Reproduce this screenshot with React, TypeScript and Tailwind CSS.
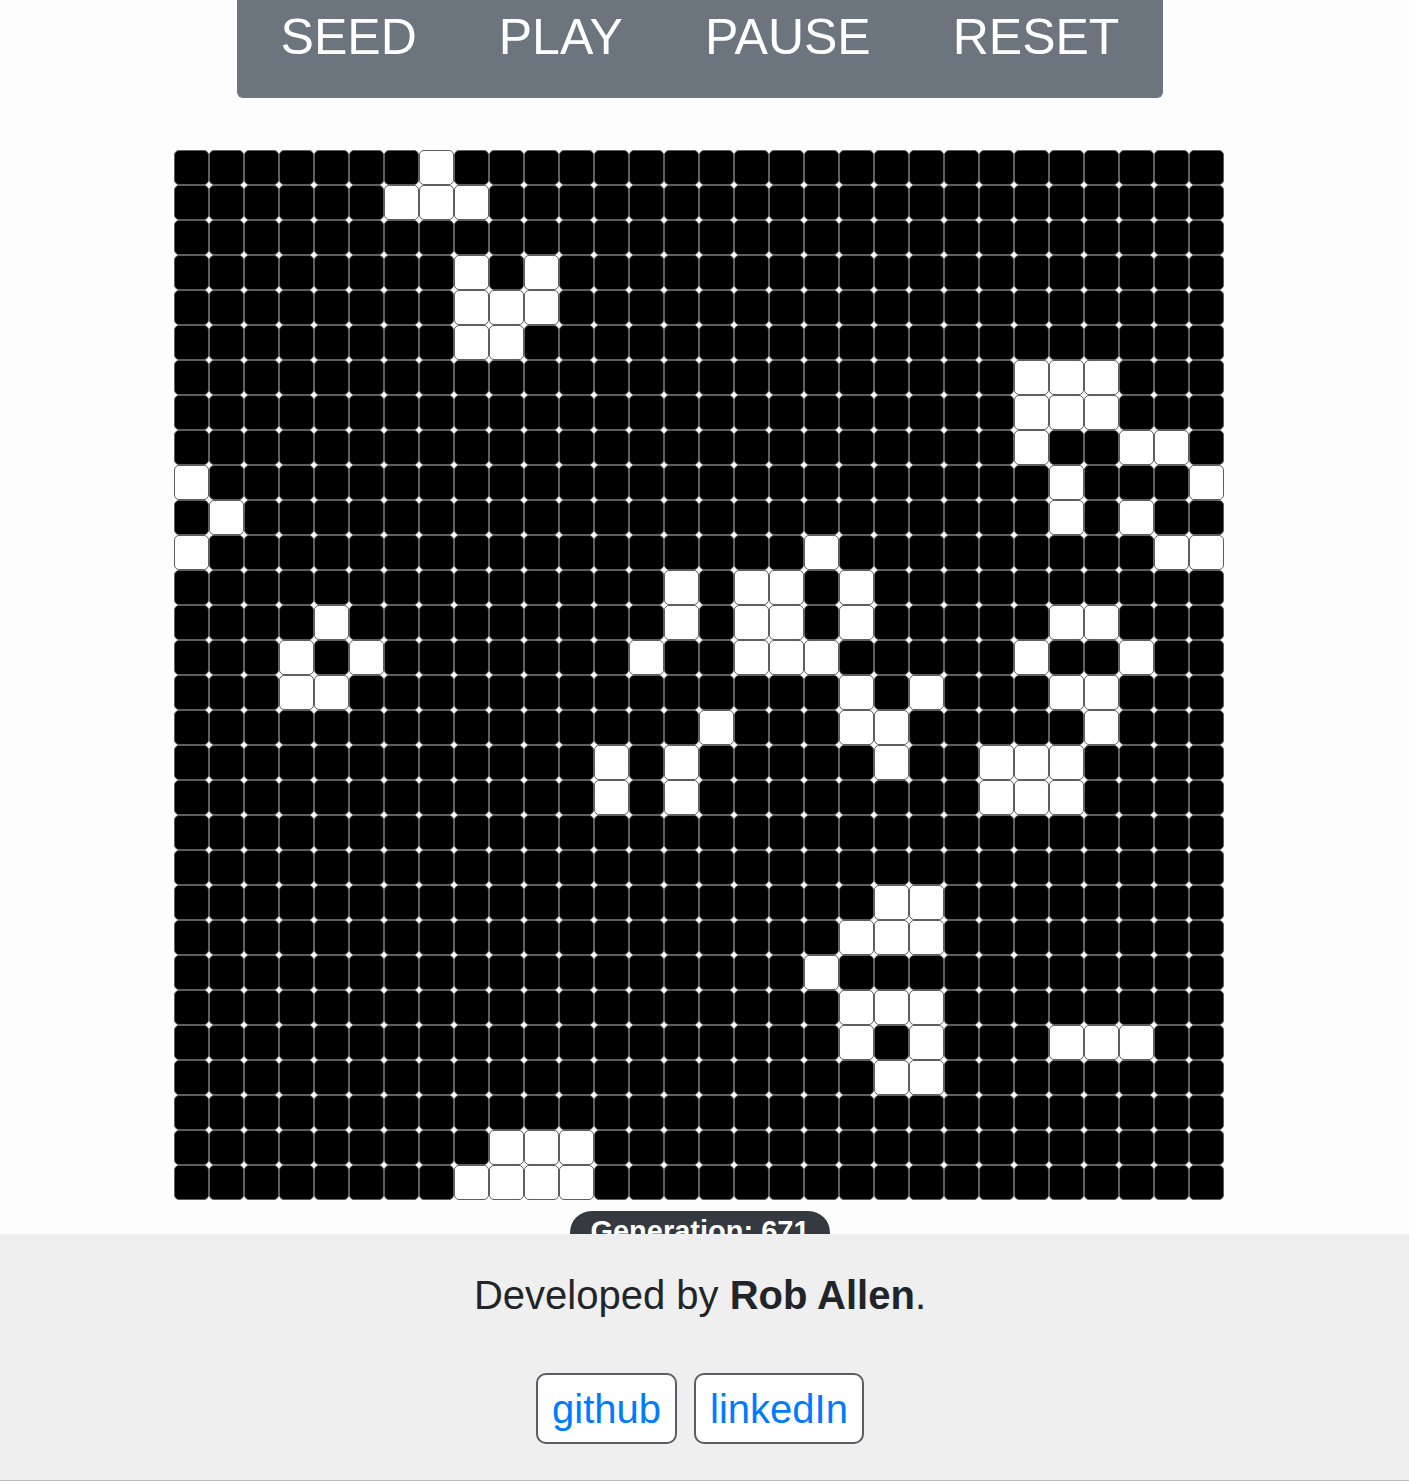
import React from "react"

const SIZE = 30

// live cells per row, taken from the current generation
const LIVE: Record<number, number[]> = {
	0: [7],
	1: [6, 7, 8],
	3: [8, 10],
	4: [8, 9, 10],
	5: [8, 9],
	6: [24, 25, 26],
	7: [24, 25, 26],
	8: [24, 27, 28],
	9: [0, 25, 29],
	10: [1, 25, 27],
	11: [0, 18, 28, 29],
	12: [14, 16, 17, 19],
	13: [4, 14, 16, 17, 19, 25, 26],
	14: [3, 5, 13, 16, 17, 18, 24, 27],
	15: [3, 4, 19, 21, 25, 26],
	16: [15, 19, 20, 26],
	17: [12, 14, 20, 23, 24, 25],
	18: [12, 14, 23, 24, 25],
	21: [20, 21],
	22: [19, 20, 21],
	23: [18],
	24: [19, 20, 21],
	25: [19, 21, 25, 26, 27],
	26: [20, 21],
	28: [9, 10, 11],
	29: [8, 9, 10, 11],
}

const isAlive = (r: number, c: number) => (LIVE[r] ?? []).includes(c)

function Controls() {
	const items = ["SEED", "PLAY", "PAUSE", "RESET"]
	return (
		<nav className="mx-auto flex h-[98px] w-[926px] justify-center gap-[82px] rounded-b-[6px] bg-[#6c757d] pt-[9px]">
			{items.map((item) => (
				<button key={item} className="h-[57px] text-[50px] leading-[57px] text-white">
					{item}
				</button>
			))}
		</nav>
	)
}

function Board() {
	const cells = []
	for (let r = 0; r < SIZE; r++) {
		for (let c = 0; c < SIZE; c++) {
			cells.push(
				<div
					key={`${r}-${c}`}
					className={
						isAlive(r, c)
							? "h-[35px] w-[35px] rounded-[5px] border border-[#5e5e5e] bg-white"
							: "h-[35px] w-[35px] rounded-[5px] border border-[#5e5e5e] bg-black"
					}
				/>
			)
		}
	}
	return <div className="mt-[52px] ml-[174px] grid w-[1050px] grid-cols-[repeat(30,35px)]">{cells}</div>
}

export default function App() {
	return (
		<div className="min-h-[1482px] bg-[#fdfdfd] font-['Liberation_Sans',Arial,sans-serif] text-[#212529]">
			<main className="flex w-[1400px] flex-col">
				<Controls />
				<Board />
				<div className="mx-auto mt-[11px] h-[23px] overflow-hidden">
					<span className="block rounded-full bg-[#343a40] px-[20px] pt-[4px] pb-[6px] text-[29px] leading-[33px] font-bold text-white">
						Generation: 671
					</span>
				</div>
			</main>
			<footer className="border-b border-[#bdbdbd] bg-[#efefef] pt-[38px] pb-[36px]">
				<div className="w-[1400px] text-center">
					<p className="text-[40px] leading-[46px]">
						Developed by <b>Rob Allen</b>.
					</p>
					<div className="mt-[55px] flex justify-center gap-[17px]">
						<a className="flex h-[71px] items-center rounded-[10px] border-2 border-[#5a5e63] bg-white px-[14px] text-[40px] text-[#007bff]">
							github
						</a>
						<a className="flex h-[71px] items-center rounded-[10px] border-2 border-[#5a5e63] bg-white px-[14px] text-[40px] text-[#007bff]">
							linkedIn
						</a>
					</div>
				</div>
			</footer>
		</div>
	)
}
